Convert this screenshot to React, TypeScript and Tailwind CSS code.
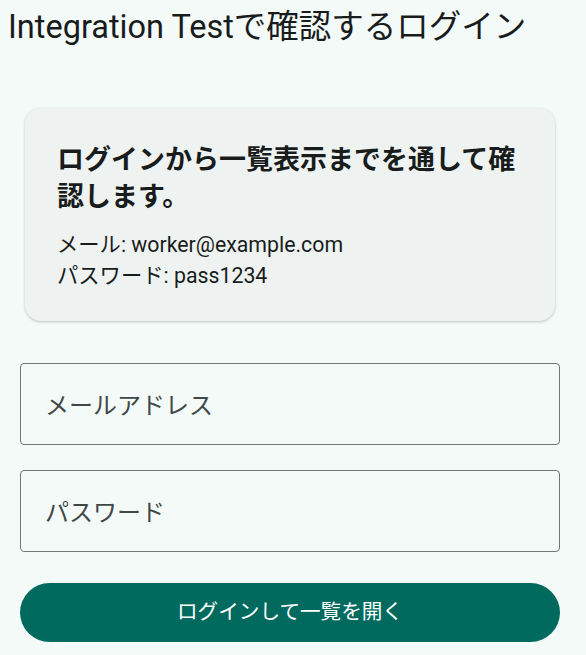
import React from 'react';

export default function App() {
  return (
    <div className="min-h-screen bg-[#f4faf8] text-[#191c1c] font-['Roboto','Noto_Sans_CJK_JP',sans-serif]">
      <h1 className="px-2 pt-[7px] text-[32.5px] leading-[40px] font-normal">Integration Testで確認するログイン</h1>

      <div className="pl-5 pr-[26px] pt-[61px]">
        <div className="mx-[5px] rounded-2xl bg-[#eef3f1] px-8 pt-[34px] pb-[30px] shadow-[0_1px_3px_rgba(0,0,0,0.22)]">
          <h2 className="text-[27px] leading-[37px] font-bold">ログインから一覧表示までを通して確認します。</h2>
          <div className="mt-[13px] text-[21.3px] leading-[31px]">
            <p>メール: worker@example.com</p>
            <p>パスワード: pass1234</p>
          </div>
        </div>

        <form className="mt-[42px] flex flex-col">
          <input
            type="email"
            placeholder="メールアドレス"
            className="h-[82px] rounded border border-[#6f7977] bg-transparent px-6 pt-1 text-[24px] placeholder-[#404847] outline-none"
          />
          <input
            type="password"
            placeholder="パスワード"
            className="mt-[25px] h-[82px] rounded border border-[#6f7977] bg-transparent px-6 pt-1 text-[24px] placeholder-[#404847] outline-none"
          />
          <button
            type="button"
            className="mt-[31px] h-[59px] rounded-full bg-[#006a5f] text-[20.6px] font-normal text-white"
          >
            ログインして一覧を開く
          </button>
        </form>
      </div>
    </div>
  );
}
